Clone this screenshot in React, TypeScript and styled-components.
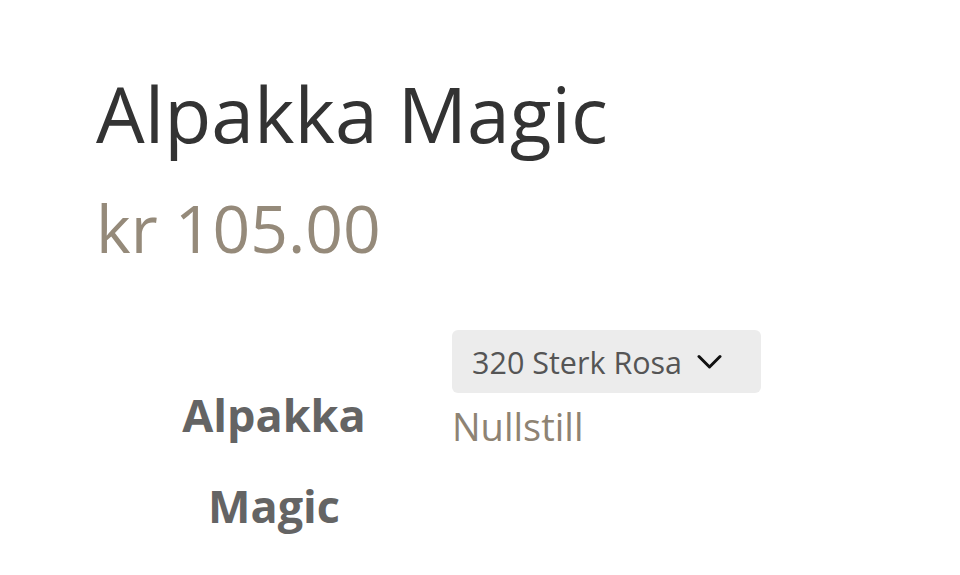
import styled, { createGlobalStyle } from "styled-components";

const GlobalStyle = createGlobalStyle`
  html, body {
    margin: 0;
    padding: 0;
    background: #fff;
  }
  body {
    font-family: "Open Sans", "Noto Sans", sans-serif;
  }
`;

const StyledPage = styled.div`
  padding: 74px 0 0 96px;
  display: flex;
  flex-direction: column;
`;

const StyledTitle = styled.h1`
  margin: 0;
  font-size: 77px;
  font-weight: 400;
  line-height: 80px;
  color: #333333;
`;

const StyledPrice = styled.div`
  margin-top: 40px;
  font-size: 66px;
  line-height: 66px;
  color: #958a7a;
`;

const StyledOptionRow = styled.div`
  margin-top: 70px;
  display: flex;
  align-items: flex-start;
`;

const StyledLabel = styled.div`
  width: 356px;
  box-sizing: border-box;
  padding: 0 50px;
  margin-top: 39px;
  text-align: center;
  font-size: 45px;
  font-weight: 700;
  line-height: 91px;
  color: #646464;
`;

const StyledValueCell = styled.div`
  display: flex;
  flex-direction: column;
  gap: 10px;
`;

const StyledSelect = styled.button`
  all: unset;
  box-sizing: border-box;
  width: 309px;
  height: 63px;
  padding-left: 20px;
  display: flex;
  align-items: center;
  gap: 15px;
  background-color: #ececec;
  border-radius: 6px;
  font-size: 30.5px;
  color: #555555;
  cursor: pointer;
`;

const StyledChevron = styled.svg`
  width: 25px;
  height: 15px;
  flex-shrink: 0;
`;

const StyledReset = styled.a`
  font-size: 38px;
  line-height: 46px;
  color: #8e8373;
  text-decoration: none;
  cursor: pointer;
`;

const App = () => {
  return (
    <>
      <GlobalStyle />
      <StyledPage>
        <StyledTitle>Alpakka Magic</StyledTitle>
        <StyledPrice>kr 105.00</StyledPrice>
        <StyledOptionRow>
          <StyledLabel>Alpakka Magic</StyledLabel>
          <StyledValueCell>
            <StyledSelect>
              320 Sterk Rosa
              <StyledChevron viewBox="0 0 25 15" fill="none">
                <path
                  d="M2 2.5l10.5 10.5L23 2.5"
                  stroke="#111"
                  strokeWidth="3"
                  strokeLinecap="round"
                  strokeLinejoin="round"
                />
              </StyledChevron>
            </StyledSelect>
            <StyledReset>Nullstill</StyledReset>
          </StyledValueCell>
        </StyledOptionRow>
      </StyledPage>
    </>
  );
};

export default App;
